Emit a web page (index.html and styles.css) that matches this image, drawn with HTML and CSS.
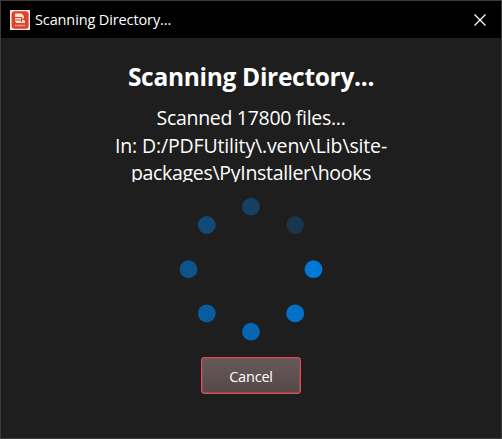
FILE: index.html
```html
<!DOCTYPE html>
<html lang="en">
<head>
<meta charset="utf-8">
<title>Scanning Directory...</title>
<link rel="stylesheet" href="styles.css">
</head>
<body>
<div class="window">
  <header class="titlebar">
    <svg class="app-icon" viewBox="0 0 20 20">
      <rect width="20" height="20" fill="#f3e6d8"/>
      <rect x="1.6" y="1.2" width="17" height="17.6" rx="3" fill="#dc432f"/>
      <path d="M5 3.5h6.5L14 6v2.5h-2V7H5zM5 8h6v1.5H5zM5 10.5h6V12H5zM12 9.5l3 1.2v2.3H6v-1h6z" fill="#f8e4d8"/>
      <path d="M5 15.5h10" stroke="#f2b9a8" stroke-width="1.6" stroke-dasharray="1.5 .6"/>
    </svg>
    <span class="caption">Scanning Directory...</span>
    <svg class="close" viewBox="0 0 12 12"><path d="M.5.5l11 11M11.5.5l-11 11" stroke="#fff" stroke-width="1.25"/></svg>
  </header>
  <main class="content">
    <h1 class="heading">Scanning Directory...</h1>
    <div class="status">
      <div class="line count">Scanned 17800 files...</div>
      <div class="line path-a">In: D:/PDFUtility\.venv\Lib\site-</div>
      <div class="line path-b">packages\PyInstaller\hooks</div>
    </div>
    <svg class="spinner" viewBox="-72 -72 144 144">
      <circle cx="62.5" cy="0.2" r="8.9" fill="#0078d7"/>
      <circle cx="44.2" cy="44.4" r="8.9" fill="#0470c7"/>
      <circle cx="0" cy="62.7" r="8.9" fill="#0766b2"/>
      <circle cx="-44.2" cy="44.4" r="8.9" fill="#0a5c9e"/>
      <circle cx="-62.5" cy="0.2" r="8.9" fill="#0e5389"/>
      <circle cx="-44.2" cy="-44" r="8.9" fill="#114a76"/>
      <circle cx="0" cy="-62.3" r="8.9" fill="#154061"/>
      <circle cx="44.2" cy="-44" r="8.9" fill="#18364d"/>
    </svg>
    <button class="cancel"><span class="cancel-label">Cancel</span></button>
  </main>
</div>
</body>
</html>
```
FILE: styles.css
```css
* { box-sizing: border-box; }
body {
  margin: 0;
  background: #1e1e1e;
  font-family: "Open Sans", "Noto Sans", sans-serif;
  color: #fff;
}
.window {
  height: 439px;
  border: 1px solid #3b3b3b;
  background: #1e1e1e;
  overflow: hidden;
}
.titlebar {
  display: flex;
  align-items: center;
  height: 37px;
  padding: 0 15px 0 9px;
  background: #000;
}
.app-icon { width: 20px; height: 20px; }
.caption {
  margin-left: 5px;
  font-size: 14.5px;
  line-height: 20px;
  letter-spacing: -0.12px;
  white-space: nowrap;
}
.close { width: 12px; height: 12px; margin-left: auto; }
.content {
  display: flex;
  flex-direction: column;
  align-items: center;
}
.heading {
  margin: 22px 0 0;
  font-size: 24.5px;
  line-height: 34px;
  font-weight: 700;
  letter-spacing: -0.3px;
  white-space: nowrap;
}
.status {
  width: 300px;
  height: 78px;
  margin-top: 10px;
  overflow: hidden;
  text-align: center;
  font-size: 19.5px;
  line-height: 27.5px;
}
.line { white-space: nowrap; }
.count { letter-spacing: -0.3px; }
.path-a { letter-spacing: -0.15px; }
.path-b { letter-spacing: -0.3px; }
.spinner { width: 144px; height: 144px; margin-top: 15px; }
.cancel {
  width: 100px;
  height: 37px;
  margin-top: 16px;
  padding: 2px 0 0;
  border: 1px solid #f04354;
  border-radius: 3px;
  background: linear-gradient(#675a5b, #544849);
  box-shadow: inset 0 0 0 1px #7d5459;
  color: #fff;
  font-family: inherit;
  font-size: 14.5px;
  line-height: 20px;
}
.cancel-label { letter-spacing: -0.2px; }
```
